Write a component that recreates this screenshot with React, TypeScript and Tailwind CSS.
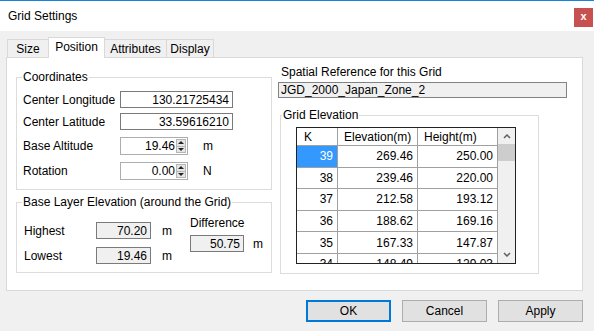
import React from 'react';

const rows = [
  { k: '39', elev: '269.46', height: '250.00' },
  { k: '38', elev: '239.46', height: '220.00' },
  { k: '37', elev: '212.58', height: '193.12' },
  { k: '36', elev: '188.62', height: '169.16' },
  { k: '35', elev: '167.33', height: '147.87' },
  { k: '34', elev: '148.49', height: '129.03' },
];

const TextBox: React.FC<{ value: string; w: string; readOnly?: boolean }> = ({ value, w, readOnly }) => (
  <div
    className={`${w} h-[17px] border flex items-center justify-end pr-[3px] ${
      readOnly ? 'bg-[#f0f0f0] border-[#7a7a7a]' : 'bg-white border-[#7a7a7a]'
    }`}
  >
    {value}
  </div>
);

const Spinner: React.FC<{ value: string }> = ({ value }) => (
  <div className="w-[68px] h-[18px] border border-[#adadad] bg-white flex">
    <div className="flex-1 flex items-center justify-end pr-[1px]">{value}</div>
    <div className="w-[10px] my-[1px] mr-[1px] flex flex-col border border-[#b5b5b5] bg-[#e6e6e6]">
      <div className="flex-1 flex items-center justify-center border-b border-[#b5b5b5]">
        <svg width="6" height="3" viewBox="0 0 6 3">
          <polygon points="0,3 3,0 6,3" fill="#222" />
        </svg>
      </div>
      <div className="flex-1 flex items-center justify-center">
        <svg width="6" height="3" viewBox="0 0 6 3">
          <polygon points="0,0 6,0 3,3" fill="#222" />
        </svg>
      </div>
    </div>
  </div>
);

const Chevron: React.FC<{ down?: boolean }> = ({ down }) => (
  <svg width="8" height="5" viewBox="0 0 8 5">
    <polyline
      points={down ? '1,1 4,4 7,1' : '1,4 4,1 7,4'}
      fill="none"
      stroke="#606060"
      strokeWidth="1.5"
    />
  </svg>
);

const Tab: React.FC<{ label: string; w: string; active?: boolean }> = ({ label, w, active }) =>
  active ? (
    <div className={`${w} h-[21px] -mb-px -ml-px relative z-10 bg-white border border-b-0 border-[#d9d9d9] flex items-center justify-center pb-[2px]`}>
      {label}
    </div>
  ) : (
    <div className={`${w} h-[18px] -ml-px first:ml-0 bg-[#f0f0f0] border border-b-0 border-[#d9d9d9] flex items-center justify-center`}>
      {label}
    </div>
  );

export default function App() {
  return (
    <div className="w-[594px] h-[331px] bg-[#f0f0f0] border-t border-[#1883d7] flex flex-col text-[12px] leading-[14px] text-black font-['Liberation_Sans',Arial,sans-serif] overflow-hidden">
      {/* title bar */}
      <div className="h-[30px] bg-white flex items-center justify-between pl-[8px] pr-[1px] shrink-0">
        <span>Grid Settings</span>
        <div className="w-[19px] h-[19px] mt-[3px] bg-[#c75050] flex items-center justify-center text-white text-[11px] font-bold leading-none pb-[2px]">
          x
        </div>
      </div>

      <div className="pl-[6px] pt-[6px]">
        {/* tabs */}
        <div className="h-[20px] flex items-end pl-[1px]">
          <Tab label="Size" w="w-[42px]" />
          <Tab label="Position" w="w-[57px]" active />
          <Tab label="Attributes" w="w-[63px]" />
          <Tab label="Display" w="w-[48px]" />
        </div>

        {/* panel */}
        <div className="w-[577px] h-[234px] bg-white border border-[#d9d9d9] flex pl-[9px]">
          {/* left column */}
          <div className="w-[256px] pt-[12px] flex flex-col">
            <fieldset className="border border-[#dcdcdc]">
              <legend className="ml-[5px] px-[1px] leading-[14px]">Coordinates</legend>
              <div className="pl-[6px] pb-[9px]">
                <div className="h-[17px] mt-[7px] flex items-center">
                  <span className="w-[97px]">Center Longitude</span>
                  <TextBox value="130.21725434" w="w-[113px]" />
                </div>
                <div className="h-[17px] mt-[5px] flex items-center">
                  <span className="w-[97px]">Center Latitude</span>
                  <TextBox value="33.59616210" w="w-[113px]" />
                </div>
                <div className="h-[18px] mt-[7px] flex items-center">
                  <span className="w-[97px]">Base Altitude</span>
                  <Spinner value="19.46" />
                  <span className="ml-[15px]">m</span>
                </div>
                <div className="h-[18px] mt-[7px] flex items-center">
                  <span className="w-[97px]">Rotation</span>
                  <Spinner value="0.00" />
                  <span className="ml-[15px]">N</span>
                </div>
              </div>
            </fieldset>

            <fieldset className="border border-[#dcdcdc] mt-[5px]">
              <legend className="ml-[5px] px-[1px] leading-[14px]">Base Layer Elevation (around the Grid)</legend>
              <div className="pl-[7px] pb-[8px] flex">
                <div className="w-[166px]">
                  <div className="h-[17px] mt-[13px] flex items-center">
                    <span className="w-[72px]">Highest</span>
                    <TextBox value="70.20" w="w-[55px]" readOnly />
                    <span className="ml-[11px]">m</span>
                  </div>
                  <div className="h-[17px] mt-[8px] flex items-center">
                    <span className="w-[72px]">Lowest</span>
                    <TextBox value="19.46" w="w-[55px]" readOnly />
                    <span className="ml-[11px]">m</span>
                  </div>
                </div>
                <div className="pt-[7px]">
                  <div>Difference</div>
                  <div className="h-[17px] mt-[5px] flex items-center">
                    <TextBox value="50.75" w="w-[54px]" readOnly />
                    <span className="ml-[9px]">m</span>
                  </div>
                </div>
              </div>
            </fieldset>
          </div>

          {/* right column */}
          <div className="ml-[6px] pt-[7px] flex flex-col">
            <div className="pl-[3px]">Spatial Reference for this Grid</div>
            <div className="w-[289px] h-[16px] mt-[3px] bg-[#f0f0f0] border border-[#838383] flex items-center pl-[2px]">
              JGD_2000_Japan_Zone_2
            </div>

            <fieldset className="w-[259px] ml-[2px] mt-[10px] border border-[#dcdcdc]">
              <legend className="ml-[1px] px-[1px] leading-[14px]">Grid Elevation</legend>
              <div className="pl-[15px] pt-[5px] pb-[9px]">
                <div className="w-[220px] h-[137px] border border-[#222] flex overflow-hidden">
                  <div className="w-[201px] flex flex-col shrink-0">
                    <div className="h-[18px] flex shrink-0 border-b border-[#a0a0a0]">
                      <div className="w-[41px] border-r border-[#a0a0a0] pl-[7px] flex items-center">K</div>
                      <div className="w-[80px] border-r border-[#a0a0a0] pl-[6px] flex items-center">Elevation(m)</div>
                      <div className="w-[80px] border-r border-[#a0a0a0] pl-[6px] flex items-center">Height(m)</div>
                    </div>
                    {rows.map((r, i) => (
                      <div key={r.k} className="h-[21.6px] flex shrink-0 border-b border-[#a0a0a0]">
                        <div
                          className={`w-[41px] border-r border-[#a0a0a0] pr-[4px] flex items-center justify-end ${
                            i === 0 ? 'bg-[#3399ff] text-white' : ''
                          }`}
                        >
                          {r.k}
                        </div>
                        <div className="w-[80px] border-r border-[#a0a0a0] pr-[4px] flex items-center justify-end">{r.elev}</div>
                        <div className="w-[80px] border-r border-[#a0a0a0] pr-[4px] flex items-center justify-end">{r.height}</div>
                      </div>
                    ))}
                  </div>
                  <div className="flex-1 bg-[#f0f0f0] flex flex-col">
                    <div className="h-[16px] flex items-center justify-center">
                      <Chevron />
                    </div>
                    <div className="h-[17px] bg-[#cdcdcd]" />
                    <div className="flex-1" />
                    <div className="h-[17px] flex items-center justify-center">
                      <Chevron down />
                    </div>
                  </div>
                </div>
              </div>
            </fieldset>
          </div>
        </div>

        {/* buttons */}
        <div className="w-[577px] mt-[9px] flex justify-end gap-[11px]">
          <button className="w-[85px] h-[22px] bg-[#e1e1e1] border-2 border-[#0078d7] flex items-center justify-center">
            OK
          </button>
          <button className="w-[85px] h-[22px] bg-[#e1e1e1] border border-[#adadad] flex items-center justify-center">
            Cancel
          </button>
          <button className="w-[85px] h-[22px] bg-[#e1e1e1] border border-[#adadad] flex items-center justify-center">
            Apply
          </button>
        </div>
      </div>
    </div>
  );
}
